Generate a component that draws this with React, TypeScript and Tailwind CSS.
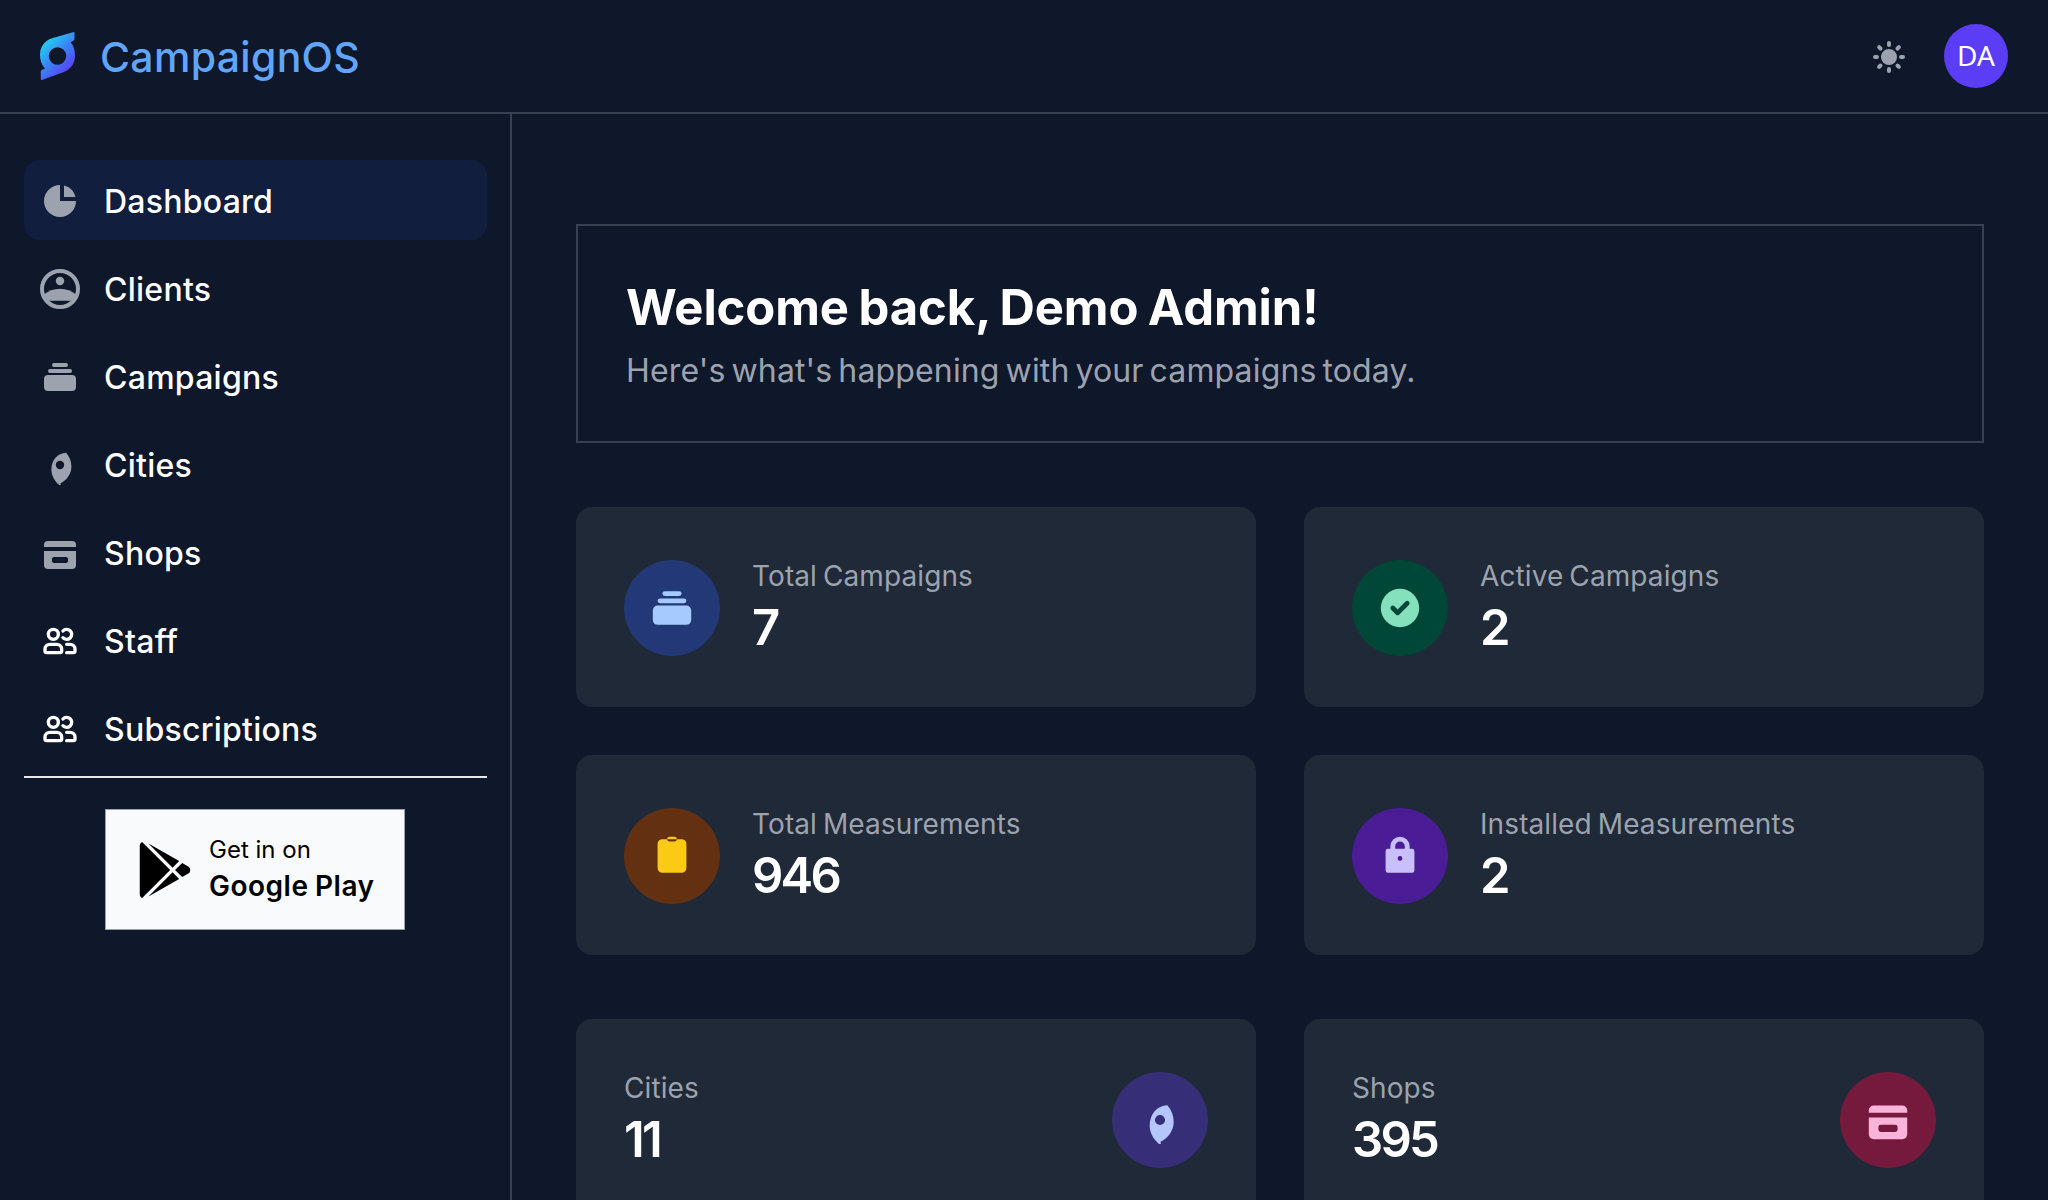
import type { ComponentType, ReactNode } from 'react';
import { FaGooglePlay } from 'react-icons/fa';
import { HiChartPie, HiCheckCircle, HiCollection, HiSun } from 'react-icons/hi';

type IconProps = { className?: string };

export default function App() {
  return (
    <div className="flex h-[1200px] w-[2048px] flex-col overflow-hidden bg-[#0f172a] font-['Inter',sans-serif] text-white">
      <Header />
      <div className="flex min-h-0 flex-1">
        <Sidebar />
        <DashboardPage />
      </div>
    </div>
  );
}

function Header() {
  return (
    <header className="flex h-[114px] shrink-0 items-center justify-between border-b-2 border-[#374151] px-10">
      <div className="flex items-center gap-[25px]">
        <Logo className="h-12 w-[35px]" />
        <span className="mt-px text-[41px] leading-[56px] font-medium tracking-[0.3px] text-[#60a5fa]">
          CampaignOS
        </span>
      </div>
      <div className="flex items-center gap-[35px]">
        <HiSun className="mt-[2px] h-10 w-10 text-[#9ca3af]" />
        <div className="flex h-16 w-16 items-center justify-center rounded-full bg-[#5b3df5] pb-[2px] font-['Noto_Sans',sans-serif] text-[28px]">
          DA
        </div>
      </div>
    </header>
  );
}

interface NavItem {
  label: string;
  icon: ComponentType<IconProps>;
  iconClass: string;
  active?: boolean;
}

const navItems: NavItem[] = [
  { label: 'Dashboard', icon: HiChartPie, iconClass: 'text-[#9ca3af]', active: true },
  { label: 'Clients', icon: ClientsIcon, iconClass: 'text-[#9ca3af]' },
  { label: 'Campaigns', icon: HiCollection, iconClass: 'text-[#9ca3af]' },
  { label: 'Cities', icon: CityIcon, iconClass: 'text-[#9ca3af]' },
  { label: 'Shops', icon: ShopIcon, iconClass: 'text-[#9ca3af]' },
  { label: 'Staff', icon: UsersIcon, iconClass: 'text-white' },
  { label: 'Subscriptions', icon: UsersIcon, iconClass: 'text-white' },
];

function Sidebar() {
  return (
    <aside className="w-[512px] shrink-0 border-r-2 border-[#374151] pt-[46px] pr-[23px] pl-6">
      <ul className="space-y-2 border-b-2 border-gray-200 pb-2">
        {navItems.map(({ label, icon: Icon, iconClass, active }) => (
          <li key={label}>
            <a className={`flex h-20 items-center gap-6 rounded-2xl px-4 ${active ? 'bg-[#111e3e]' : ''}`}>
              <Icon className={`mt-px h-10 w-10 ${iconClass}`} />
              <span className="mt-1 text-[32px] leading-[48px] font-medium tracking-[0.25px]">{label}</span>
            </a>
          </li>
        ))}
      </ul>
      <a className="mt-[31px] ml-[81px] flex h-[121px] w-[300px] items-center gap-4 border border-gray-400 bg-gray-50 pl-[31px] text-black">
        <FaGooglePlay className="h-14 w-14" />
        <span className="flex flex-col">
          <span className="text-2xl leading-8">Get in on</span>
          <span className="text-[28px] leading-10 font-semibold tracking-[0.5px] [word-spacing:-1px]">Google Play</span>
        </span>
      </a>
    </aside>
  );
}

function DashboardPage() {
  return (
    <main className="flex flex-1 flex-col gap-16 px-16 pt-[110px]">
      <div className="h-[219px] shrink-0 border-2 border-[#374151] px-12 pt-[50px]">
        <h1 className="text-[49px] leading-[64px] font-bold tracking-[-0.1px] [word-spacing:-2px]">
          Welcome back, Demo Admin!
        </h1>
        <p className="mt-[7px] text-[32px] leading-[48px] tracking-[0.15px] text-[#9ca3af] [word-spacing:-3.2px]">
          Here's what's happening with your campaigns today.
        </p>
      </div>

      {/* Stats cards */}
      <div className="grid shrink-0 grid-cols-2 gap-12">
        <StatCard
          title="Total Campaigns"
          value={7}
          color="bg-[#233876] text-[#a4cafe]"
          icon={<HiCollection className="h-12 w-12" />}
        />
        <StatCard
          title="Active Campaigns"
          value={2}
          color="bg-[#014737] text-[#84e1bc]"
          icon={<HiCheckCircle className="h-12 w-12" />}
        />
        <StatCard
          title="Total Measurements"
          value={946}
          color="bg-[#633112] text-[#faca15]"
          icon={<ClipboardIcon className="h-12 w-12" />}
        />
        <StatCard
          title="Installed Measurements"
          value={2}
          color="bg-[#4a1d96] text-[#cabffd]"
          icon={<LockIcon className="h-12 w-12" />}
        />
      </div>

      {/* Locations */}
      <div className="grid shrink-0 grid-cols-2 gap-12">
        <StatCard
          title="Cities"
          value={11}
          color="bg-[#362f78] text-[#b4c6fc]"
          icon={<CityIcon className="h-12 w-12" />}
          iconEnd
        />
        <StatCard
          title="Shops"
          value={395}
          color="bg-[#751a3d] text-[#f8b4d9]"
          icon={<ShopIcon className="h-12 w-12" />}
          iconEnd
        />
      </div>
    </main>
  );
}

interface StatCardProps {
  title: string;
  value: number;
  color: string;
  icon: ReactNode;
  iconEnd?: boolean;
}

function StatCard({ title, value, color, icon, iconEnd }: StatCardProps) {
  return (
    <div
      className={`flex h-[200px] items-center rounded-2xl bg-[#1f2937] px-12 pt-[2px] ${
        iconEnd ? 'flex-row-reverse justify-between' : 'gap-8'
      }`}
    >
      <div className={`flex h-24 w-24 shrink-0 items-center justify-center rounded-full ${color}`}>{icon}</div>
      <div>
        <p className="text-[28px] leading-10 tracking-[0.1px] text-[#9ca3af] [word-spacing:-2px]">{title}</p>
        <p className="text-[49px] leading-[64px] font-semibold tracking-[-2.8px]">{value}</p>
      </div>
    </div>
  );
}

function Logo({ className }: IconProps) {
  return (
    <svg className={className} viewBox="0 0 35 48" fill="none">
      <defs>
        <linearGradient id="logo" x1="3" y1="10" x2="31" y2="38" gradientUnits="userSpaceOnUse">
          <stop stopColor="#22d3ee" />
          <stop offset="0.5" stopColor="#3b82f6" />
          <stop offset="1" stopColor="#5b3df5" />
        </linearGradient>
      </defs>
      <path
        fill="url(#logo)"
        fillRule="evenodd"
        d="M33 .2C34.1-.1 34.5.1 34.5 1v6.2c0 .7-.3 1.1-.9 1.4L30.6 10.3C33.7 13.6 35 18 35 23.5c0 8-4 13.6-11 16.5L2.5 47.8C1.4 48.2.8 48 .8 47v-7.4c0-.8.4-1.3 1-1.6L5 36.5C1.8 33 0 28.5 0 23 0 14.5 4.5 8.8 12 6.2ZM17.5 15.3a8.7 8.7 0 1 0 0 17.4 8.7 8.7 0 0 0 0-17.4Z"
      />
    </svg>
  );
}

function ClientsIcon({ className }: IconProps) {
  return (
    <svg className={className} viewBox="0 0 20 20" fill="currentColor">
      <circle cx="10" cy="10" r="9" fill="none" stroke="currentColor" strokeWidth="2" />
      <circle cx="10" cy="6" r="2.1" />
      <path d="M1.8 12.9a12.5 12.5 0 0 1 16.4 0L15.8 15.9H4.2Z" />
    </svg>
  );
}

function CityIcon({ className }: IconProps) {
  return (
    <svg className={className} viewBox="0 0 20 20" fill="currentColor">
      <path
        fillRule="evenodd"
        d="M13.1 3.9C14.8 6 15.7 8.2 15.7 10.7c0 3.6-2.1 6.7-5.5 8.4l.2.9H9.6C7.2 18 5.7 15.2 5.7 12.4c0-4.8 3-8.4 7.4-8.5ZM10 7.9a2.1 2.1 0 1 0 0 4.2 2.1 2.1 0 0 0 0-4.2Z"
      />
    </svg>
  );
}

function ShopIcon({ className }: IconProps) {
  return (
    <svg className={className} viewBox="0 0 20 20" fill="currentColor">
      <path d="M4 4a2 2 0 0 0-2 2v1h16V6a2 2 0 0 0-2-2H4Z" />
      <path
        fillRule="evenodd"
        d="M18 9H2v7a2 2 0 0 0 2 2h12a2 2 0 0 0 2-2V9ZM7 12a1 1 0 0 0-1 1v1a1 1 0 0 0 1 1h6a1 1 0 0 0 1-1v-1a1 1 0 0 0-1-1H7Z"
      />
    </svg>
  );
}

function UsersIcon({ className }: IconProps) {
  return (
    <svg className={className} viewBox="0 0 24 24" fill="none" stroke="currentColor" strokeWidth="2" strokeLinecap="round">
      <path d="M16 19h4a1 1 0 0 0 1-1v-1a3 3 0 0 0-3-3h-2m-2.236-4a3 3 0 1 0 0-4M3 18v-1a3 3 0 0 1 3-3h4a3 3 0 0 1 3 3v1a1 1 0 0 1-1 1H4a1 1 0 0 1-1-1Zm8-10a3 3 0 1 1-6 0 3 3 0 0 1 6 0Z" />
    </svg>
  );
}

function ClipboardIcon({ className }: IconProps) {
  return (
    <svg className={className} viewBox="0 0 20 20" fill="currentColor">
      <path
        fillRule="evenodd"
        d="M9 2a1 1 0 0 0 0 2h2a1 1 0 1 0 0-2H9ZM4 5a2 2 0 0 1 2-2h8a2 2 0 0 1 2 2v10a2 2 0 0 1-2 2H6a2 2 0 0 1-2-2V5Z"
      />
    </svg>
  );
}

function LockIcon({ className }: IconProps) {
  return (
    <svg className={className} viewBox="0 0 20 20" fill="currentColor">
      <path
        fillRule="evenodd"
        d="M10 2a4 4 0 0 0-4 4v1H5a1 1 0 0 0-1 1v8a1 1 0 0 0 1 1h10a1 1 0 0 0 1-1V8a1 1 0 0 0-1-1h-1V6a4 4 0 0 0-4-4Zm2 5V6a2 2 0 1 0-4 0v1h4Zm-2 3a1 1 0 1 0 0 2 1 1 0 0 0 0-2Z"
      />
    </svg>
  );
}
